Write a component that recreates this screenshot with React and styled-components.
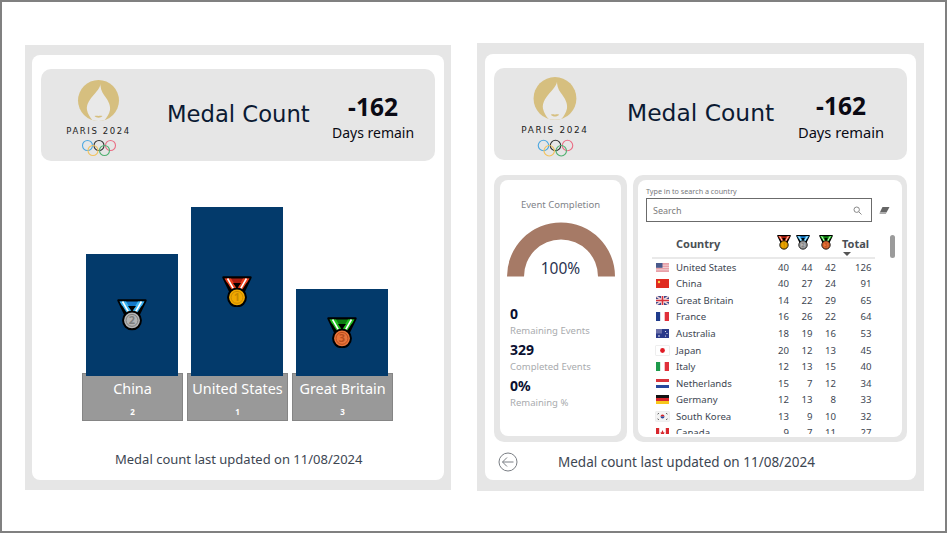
import React from 'react';
import styled, { createGlobalStyle } from 'styled-components';

const Global = createGlobalStyle`
  html, body { margin: 0; padding: 0; background: #fff; }
  body { font-family: "Noto Sans", "Open Sans", sans-serif; }
`;

const Slide = styled.div`
  width: 947px;
  height: 533px;
  box-sizing: border-box;
  border: 2px solid #808080;
  padding: 41px 0 0 23px;
  display: flex;
  align-items: flex-start;
  gap: 26px;
  overflow: hidden;
`;

const Panel = styled.div`
  box-sizing: border-box;
  width: ${p => p.$w}px;
  height: ${p => p.$h}px;
  margin-top: ${p => p.$top}px;
  padding: ${p => p.$pad};
  background: #e6e6e6;
  display: flex;
`;

const Sheet = styled.div`
  flex: 1;
  background: #fff;
  border-radius: 8px;
  padding: 14px 9px 0;
  display: flex;
  flex-direction: column;
`;

const Header = styled.div`
  height: 92px;
  flex: none;
  background: #e6e6e6;
  border-radius: 10px;
  padding-left: 25px;
  display: flex;
  align-items: center;
`;

const LogoSvg = styled.svg`
  width: ${p => p.$w}px;
  flex: none;
  margin: 6px 0 0 ${p => p.$left}px;
`;

const Title = styled.div`
  margin: 0 0 3px ${p => p.$left}px;
  width: ${p => p.$width}px;
  font-family: "DejaVu Sans", sans-serif;
  font-size: ${p => p.$size}px;
  white-space: nowrap;
  color: #0b1a33;
`;

const Countdown = styled.div`
  margin: 5px 0 0 ${p => p.$left}px;
  width: ${p => p.$width}px;
  display: flex;
  flex-direction: column;
  align-items: center;
  color: #0a0a14;
  white-space: nowrap;
`;

const Days = styled.div`
  font-size: 24.5px;
  font-weight: 700;
  line-height: 30px;
`;

const DaysLabel = styled.div`
  font-size: ${p => p.$size}px;
  line-height: 20px;
  margin-top: 1px;
`;

const Podium = styled.div`
  margin-top: 46px;
  padding-left: 41px;
  display: flex;
  align-items: flex-end;
  gap: 4px;
`;

const PodiumColumn = styled.div`
  width: 101px;
  display: flex;
  flex-direction: column;
  align-items: center;
`;

const Bar = styled.div`
  width: 92px;
  height: ${p => p.$h}px;
  margin: 0 1px -3px 0;
  position: relative;
  background: #033a6b;
  display: flex;
  align-items: center;
  justify-content: center;
`;

const Plinth = styled.div`
  box-sizing: border-box;
  width: 101px;
  height: 48px;
  background: #999;
  border: 1px solid #858585;
  color: #fff;
  display: flex;
  flex-direction: column;
  align-items: center;
`;

const PlinthName = styled.div`
  font-size: 14.4px;
  line-height: 20px;
  margin-top: 5px;
  white-space: nowrap;
`;

const PlinthRank = styled.div`
  font-size: 8px;
  font-weight: 700;
  line-height: 10px;
  margin-top: 8px;
`;

const Footer = styled.div`
  margin-top: ${p => p.$top}px;
  padding-left: ${p => p.$left}px;
  height: 20px;
  display: flex;
  align-items: center;
  font-size: ${p => p.$size}px;
  color: #3d4652;
  white-space: nowrap;
`;

const BackIcon = styled.svg`
  width: 20px;
  height: 20px;
  margin-right: 40px;
  flex: none;
`;

const Cards = styled.div`
  margin-top: 15px;
  display: flex;
  gap: 6px;
  height: 267px;
`;

const CardFrame = styled.div`
  box-sizing: border-box;
  width: ${p => p.$w}px;
  height: 267px;
  padding: ${p => p.$pad};
  background: #e6e6e6;
  border-radius: 10px;
  display: flex;
`;

const CardBody = styled.div`
  flex: 1;
  min-width: 0;
  background: #fff;
  border-radius: 8px;
  position: relative;
  overflow: hidden;
`;

const GaugeTitle = styled.div`
  margin-top: 18px;
  text-align: center;
  font-size: 9.5px;
  line-height: 14px;
  color: #7f8389;
`;

const GaugeWrap = styled.div`
  position: relative;
  width: 108px;
  height: 55px;
  margin: 10px auto 0;
`;

const GaugeValue = styled.div`
  position: absolute;
  left: 0;
  right: 0;
  bottom: -1px;
  text-align: center;
  font-size: 15.5px;
  line-height: 20px;
  color: #2b3350;
`;

const Stats = styled.div`
  margin-top: 28px;
  padding-left: 10px;
`;

const StatValue = styled.div`
  font-size: 14px;
  font-weight: 700;
  line-height: 18px;
  color: #0a1030;
`;

const StatLabel = styled.div`
  font-size: 9.5px;
  line-height: 15px;
  margin-bottom: 3px;
  color: #a9abae;
`;

const SearchLabel = styled.div`
  margin: 6px 0 0 8px;
  font-size: 7.2px;
  line-height: 10px;
  color: #77797c;
`;

const SearchRow = styled.div`
  margin: 2px 0 0 8px;
  display: flex;
  align-items: center;
`;

const SearchBox = styled.div`
  box-sizing: border-box;
  width: 226px;
  height: 24px;
  border: 1px solid #6b6b6b;
  padding: 0 9px 0 6px;
  display: flex;
  align-items: center;
  justify-content: space-between;
  font-size: 9px;
  color: #7b7b7b;
`;

const EraserIcon = styled.svg`
  width: 11px;
  height: 9px;
  margin-left: 7px;
`;

const Table = styled.div`
  margin: 7px 0 0 14px;
  width: 223px;
  height: 204.5px;
  overflow: hidden;
`;

const HeadRow = styled.div`
  display: grid;
  grid-template-columns: 24px 101px 19px 23px 23px 33px;
  height: 28px;
  border-bottom: 2px solid #e9e9e9;
`;

const HeadText = styled.div`
  font-size: 11px;
  font-weight: 700;
  line-height: 14px;
  padding-top: 8px;
  color: #4a4f55;
`;

const SortArrow = styled.div`
  width: 0;
  height: 0;
  margin: 1px 0 0 1px;
  border-left: 4px solid transparent;
  border-right: 4px solid transparent;
  border-top: 4px solid #555;
`;

const HeadMedal = styled.div`
  padding-top: 6px;
`;

const Row = styled.div`
  display: grid;
  grid-template-columns: 24px 89px 24px 23.5px 23.5px 35.5px;
  height: 16.55px;
  align-items: center;
  font-size: 9.6px;
  color: #3d4652;
`;

const FlagCell = styled.div`
  padding-left: 4px;
  display: flex;
  align-items: center;
`;

const FlagSvg = styled.svg`
  width: 13px;
  height: 9px;
  display: block;
  box-shadow: ${p => (p.$outline ? '0 0 0 0.5px #ddd' : 'none')};
`;

const Num = styled.div`
  text-align: right;
`;

const Scrollbar = styled.div`
  position: absolute;
  left: 252px;
  top: 55px;
  width: 5px;
  height: 23px;
  border-radius: 3px;
  background: #9b9b9b;
`;

const medalColors = {
  1: { bar: '#a81c10', ribbon: '#e8401c', disc: '#f0a800', num: '#c98a00' },
  2: { bar: '#1478c8', ribbon: '#3cb4f0', disc: '#b4b4b4', num: '#7d7d7d' },
  3: { bar: '#0d7d12', ribbon: '#22c022', disc: '#e8733a', num: '#b84e1d' },
};

const Medal = ({ rank, size }) => {
  const c = medalColors[rank];
  return (
    <svg width={size} height={size * 1.06} viewBox="0 0 30 32" style={{ display: 'block' }}>
      <path d="M1.5 1.5H28.5L21 17H9Z" fill="#000" stroke="#000" strokeWidth="2.6" strokeLinejoin="round" />
      <path d="M2.5 2.5H27.5L25 7H5Z" fill={c.bar} />
      <path d="M2.5 2.5H9L16.5 15L12.5 18Z" fill={c.ribbon} />
      <path d="M27.5 2.5H21L13.5 15L17.5 18Z" fill={c.ribbon} />
      <path d="M5.5 2.5L13.5 16.5M24.5 2.5L16.5 16.5" stroke="#fff" strokeWidth="1.6" />
      <path d="M11 7H19L15 12.5Z" fill="#000" />
      <circle cx="15" cy="21.5" r="9" fill={c.disc} stroke="#000" strokeWidth="2" />
      <circle cx="15" cy="21.5" r="6" fill="none" stroke={c.num} strokeWidth="1" />
      <text x="15" y="25.5" textAnchor="middle" fontSize="11" fontWeight="700" fontFamily="Noto Sans, sans-serif" fill={c.num}>
        {rank}
      </text>
    </svg>
  );
};

const Logo = ({ width, left }) => (
  <LogoSvg $w={width} $left={left} viewBox="0 0 66 78">
    <circle cx="32.5" cy="21.5" r="20.5" fill="#d6bf7f" />
    <path
      d="M34.5 3C35 8 31.5 11.5 28.5 15C24.5 19.5 20 25 21 31C21.8 35 24 38.5 26.5 41.2C30 42.2 35 42.2 38.5 41.2C41 38.5 43.2 35 44 31C44.8 25.5 41.5 20.5 38 16C35.5 12.5 34 8.5 34.5 3Z"
      fill="#e9e9e9"
    />
    <path d="M28.5 37C30.5 36.4 31.5 36.8 32.5 37C33.5 36.8 34.5 36.4 36.5 37C34.5 39.3 30.5 39.3 28.5 37Z" fill="#d6bf7f" />
    <text x="32.5" y="55" textAnchor="middle" fontSize="8.5" fontWeight="500" letterSpacing="1.6" fontFamily="DejaVu Sans, sans-serif" fill="#222">
      PARIS 2024
    </text>
    <g fill="none" strokeWidth="1.1">
      <circle cx="21.5" cy="66.5" r="5" stroke="#4ea8e0" />
      <circle cx="33" cy="66.5" r="5" stroke="#333" />
      <circle cx="44.5" cy="66.5" r="5" stroke="#ea6f86" />
      <circle cx="27" cy="71.5" r="5" stroke="#f2c35e" />
      <circle cx="38.5" cy="71.5" r="5" stroke="#4fb070" />
    </g>
  </LogoSvg>
);

const flags = {
  us: (
    <>
      <rect width="13" height="9" fill="#e8a0a8" />
      <path d="M0 2.2H13M0 4.5H13M0 6.8H13" stroke="#f3d9dc" strokeWidth="0.8" />
      <rect width="6.5" height="4.8" fill="#4a5a8c" />
    </>
  ),
  cn: (
    <>
      <rect width="13" height="9" fill="#e02b20" />
      <circle cx="3" cy="3" r="1.2" fill="#f7d84a" />
    </>
  ),
  gb: (
    <>
      <rect width="13" height="9" fill="#3b4a8c" />
      <path d="M0 0L13 9M13 0L0 9" stroke="#f0d6d8" strokeWidth="1.6" />
      <path d="M6.5 0V9M0 4.5H13" stroke="#f5e6e6" strokeWidth="3" />
      <path d="M6.5 0V9M0 4.5H13" stroke="#d8323c" strokeWidth="1.6" />
    </>
  ),
  fr: (
    <>
      <rect width="4.4" height="9" fill="#1f3b8c" />
      <rect x="4.4" width="4.3" height="9" fill="#fff" />
      <rect x="8.7" width="4.3" height="9" fill="#e0303a" />
    </>
  ),
  au: (
    <>
      <rect width="13" height="9" fill="#2b3a8a" />
      <rect width="6" height="4.5" fill="#6a6fa8" />
      <circle cx="9.5" cy="2.5" r="0.6" fill="#fff" />
      <circle cx="11" cy="4.5" r="0.6" fill="#fff" />
      <circle cx="9.5" cy="7" r="0.6" fill="#fff" />
      <circle cx="3" cy="7" r="0.8" fill="#fff" />
    </>
  ),
  jp: (
    <>
      <rect width="13" height="9" fill="#fff" />
      <circle cx="6.5" cy="4.5" r="2.4" fill="#e01b24" />
    </>
  ),
  it: (
    <>
      <rect width="4.4" height="9" fill="#1d9a4b" />
      <rect x="4.4" width="4.3" height="9" fill="#fff" />
      <rect x="8.7" width="4.3" height="9" fill="#e0303a" />
    </>
  ),
  nl: (
    <>
      <rect width="13" height="3" fill="#d8343c" />
      <rect y="3" width="13" height="3" fill="#fff" />
      <rect y="6" width="13" height="3" fill="#27479c" />
    </>
  ),
  de: (
    <>
      <rect width="13" height="3" fill="#111" />
      <rect y="3" width="13" height="3" fill="#d8262c" />
      <rect y="6" width="13" height="3" fill="#f7c71c" />
    </>
  ),
  kr: (
    <>
      <rect width="13" height="9" fill="#f3f3f3" />
      <path d="M4.5 4.5A2 2 0 0 1 8.5 4.5Z" fill="#d8262c" />
      <path d="M4.5 4.5A2 2 0 0 0 8.5 4.5Z" fill="#27479c" />
      <path d="M1.5 2.2L3 1.2M1.5 6.8L3 7.8M11.5 2.2L10 1.2M11.5 6.8L10 7.8" stroke="#444" strokeWidth="0.8" />
    </>
  ),
  ca: (
    <>
      <rect width="13" height="9" fill="#fff" />
      <rect width="3.2" height="9" fill="#d8262c" />
      <rect x="9.8" width="3.2" height="9" fill="#d8262c" />
      <path d="M6.5 2L7.6 4.5L8.6 4.2L8 6H5L4.4 4.2L5.4 4.5Z" fill="#d8262c" />
    </>
  ),
};

const rows = [
  ['us', 'United States', 40, 44, 42, 126],
  ['cn', 'China', 40, 27, 24, 91],
  ['gb', 'Great Britain', 14, 22, 29, 65],
  ['fr', 'France', 16, 26, 22, 64],
  ['au', 'Australia', 18, 19, 16, 53],
  ['jp', 'Japan', 20, 12, 13, 45],
  ['it', 'Italy', 12, 13, 15, 40],
  ['nl', 'Netherlands', 15, 7, 12, 34],
  ['de', 'Germany', 12, 13, 8, 33],
  ['kr', 'South Korea', 13, 9, 10, 32],
  ['ca', 'Canada', 9, 7, 11, 27],
];

const podium = [
  { name: 'China', rank: 2, h: 122 },
  { name: 'United States', rank: 1, h: 169 },
  { name: 'Great Britain', rank: 3, h: 87 },
];

const Updated = 'Medal count last updated on 11/08/2024';

const App = () => (
  <>
    <Global />
    <Slide>
      <Panel $w={426} $h={445} $top={2} $pad="10px 7px">
        <Sheet>
          <Header>
            <Logo width={66} left={0} />
            <Title $left={35} $width={143} $size={22.7}>Medal Count</Title>
            <Countdown $left={22} $width={82}>
              <Days>-162</Days>
              <DaysLabel $size={14}>Days remain</DaysLabel>
            </Countdown>
          </Header>
          <Podium>
            {podium.map(p => (
              <PodiumColumn key={p.name}>
                <Bar $h={p.h}>
                  <Medal rank={p.rank} size={30} />
                </Bar>
                <Plinth>
                  <PlinthName>{p.name}</PlinthName>
                  <PlinthRank>{p.rank}</PlinthRank>
                </Plinth>
              </PodiumColumn>
            ))}
          </Podium>
          <Footer $top={28} $left={74} $size={13}>{Updated}</Footer>
        </Sheet>
      </Panel>
      <Panel $w={447} $h={448} $top={0} $pad="11px 9px 11px 8px">
        <Sheet>
          <Header>
            <Logo width={69} left={2} />
            <Title $left={37} $width={148} $size={23.4}>Medal Count</Title>
            <Countdown $left={23} $width={86}>
              <Days>-162</Days>
              <DaysLabel $size={14.7}>Days remain</DaysLabel>
            </Countdown>
          </Header>
          <Cards>
            <CardFrame $w={133} $pad="5px 6px 6px 6px">
              <CardBody>
                <GaugeTitle>Event Completion</GaugeTitle>
                <GaugeWrap>
                  <svg width="108" height="55" viewBox="0 0 108 55">
                    <path d="M0 54.5A54 54 0 0 1 108 54.5H91A37 37 0 0 0 17 54.5Z" fill="#a67a66" />
                  </svg>
                  <GaugeValue>100%</GaugeValue>
                </GaugeWrap>
                <Stats>
                  <StatValue>0</StatValue>
                  <StatLabel>Remaining Events</StatLabel>
                  <StatValue>329</StatValue>
                  <StatLabel>Completed Events</StatLabel>
                  <StatValue>0%</StatValue>
                  <StatLabel>Remaining %</StatLabel>
                </Stats>
              </CardBody>
            </CardFrame>
            <CardFrame $w={274} $pad="5px">
              <CardBody>
                <SearchLabel>Type in to search a country</SearchLabel>
                <SearchRow>
                  <SearchBox>
                    Search
                    <svg width="9" height="9" viewBox="0 0 9 9" fill="none" stroke="#888" strokeWidth="1">
                      <circle cx="3.7" cy="3.7" r="2.7" />
                      <path d="M5.8 5.8L8.5 8.5" />
                    </svg>
                  </SearchBox>
                  <EraserIcon viewBox="0 0 11 9">
                    <path d="M3.5 1H10.5L7.5 6.5H0.8Z" fill="#666" />
                    <path d="M0.8 6.5L0.5 8H6.8L7.5 6.5Z" fill="#aaa" />
                  </EraserIcon>
                </SearchRow>
                <Table>
                  <HeadRow>
                    <div />
                    <HeadText>Country</HeadText>
                    <HeadMedal><Medal rank={1} size={14} /></HeadMedal>
                    <HeadMedal><Medal rank={2} size={14} /></HeadMedal>
                    <HeadMedal><Medal rank={3} size={14} /></HeadMedal>
                    <HeadText>
                      Total
                      <SortArrow />
                    </HeadText>
                  </HeadRow>
                  {rows.map(r => (
                    <Row key={r[1]}>
                      <FlagCell>
                        <FlagSvg viewBox="0 0 13 9" $outline={r[0] === 'jp' || r[0] === 'kr'}>{flags[r[0]]}</FlagSvg>
                      </FlagCell>
                      <div>{r[1]}</div>
                      <Num>{r[2]}</Num>
                      <Num>{r[3]}</Num>
                      <Num>{r[4]}</Num>
                      <Num>{r[5]}</Num>
                    </Row>
                  ))}
                </Table>
                <Scrollbar />
              </CardBody>
            </CardFrame>
          </Cards>
          <Footer $top={10} $left={4} $size={13.5}>
            <BackIcon viewBox="0 0 20 20" fill="none" stroke="#7b7f85" strokeWidth="1">
              <circle cx="10" cy="10" r="9" />
              <path d="M15.5 10H4.5M9 5.5L4.5 10L9 14.5" />
            </BackIcon>
            {Updated}
          </Footer>
        </Sheet>
      </Panel>
    </Slide>
  </>
);

export default App;
